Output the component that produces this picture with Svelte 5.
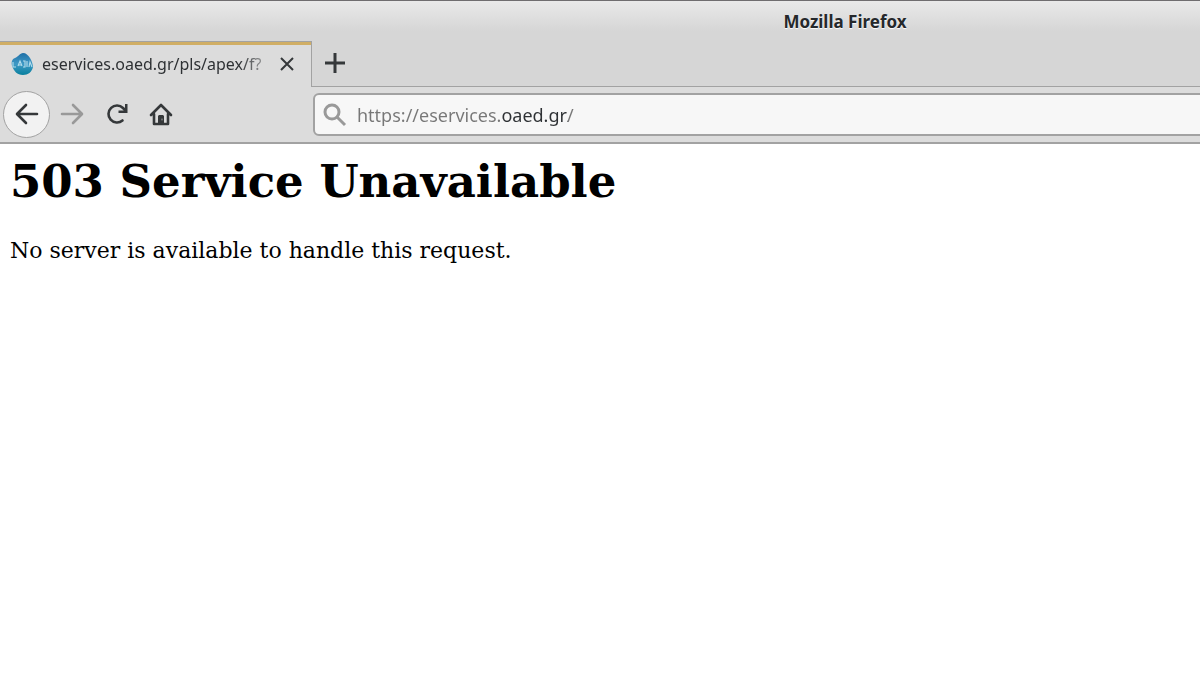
<script>
  let address = $state('https://eservices.oaed.gr/');

  const tabs = [{ id: 1, title: 'eservices.oaed.gr/pls/apex/f?' }];
</script>

<div class="window">
  <header class="titlebar">Mozilla Firefox</header>

  <div class="tabstrip">
    {#each tabs as tab (tab.id)}
      <div class="tab">
        <svg class="favicon" viewBox="0 0 24 24" aria-hidden="true">
          <defs>
            <linearGradient id="drop" x1="0" y1="0" x2="0" y2="1">
              <stop offset="0" stop-color="#1f6fa6" />
              <stop offset="0.5" stop-color="#3f9ac6" />
              <stop offset="1" stop-color="#087f9d" />
            </linearGradient>
          </defs>
          <path
            d="M13 1c3 0 5 2 7 5 2 3 3 7 3 9-1 5-5 8-10 8-6 0-9-4-11-9-1-4 0-7 3-8 3-1 5-5 8-5z"
            fill="url(#drop)"
          />
          <path
            d="M3 10v5h3M8 14l2-5 2 5M9 13h2M13 9h2v6h-2M17 9v6M19 15l1-5 2 5"
            fill="none"
            stroke="#b4ddec"
            stroke-width="1.1"
          />
        </svg>
        <span class="tab-title">{tab.title}</span>
        <button class="close" aria-label="Close tab">
          <svg viewBox="0 0 16 16"><path d="M2 2l12 12M14 2L2 14" /></svg>
        </button>
      </div>
    {/each}
    <div class="strip-rest">
      <button class="new-tab" aria-label="New tab">
        <svg viewBox="0 0 20 20"><path d="M10 0v20M0 10h20" /></svg>
      </button>
    </div>
  </div>

  <nav class="toolbar">
    <div class="nav-buttons">
      <button class="back" aria-label="Back">
        <svg viewBox="0 0 24 24"><path d="M22 12H3M11 3l-9 9 9 9" /></svg>
      </button>
      <button class="forward" aria-label="Forward" disabled>
        <svg viewBox="0 0 24 24"><path d="M2 12h19M13 3l9 9-9 9" /></svg>
      </button>
      <button aria-label="Reload">
        <svg viewBox="0 0 24 24">
          <path d="M17.500 18.500A8.500 8.500 0 1 1 18 6l2 2" />
          <path class="solid" d="M22.500 2v9h-9V8.500h5L20 7V2z" />
        </svg>
      </button>
      <button aria-label="Home">
        <svg viewBox="0 0 24 24">
          <path d="M2 13L12 3l10 10M5 12v10h14V12" />
          <path class="solid" d="M9 22v-8l1-1h4l1 1v8z" />
          <path class="knob" d="M13 17v1" />
        </svg>
      </button>
    </div>

    <label class="urlbar">
      <svg viewBox="0 0 24 24" aria-hidden="true">
        <circle cx="9" cy="9" r="7" />
        <path d="M14 14l8 8" />
      </svg>
      <input type="text" aria-label="Address" spellcheck="false" bind:value={address} />
    </label>
  </nav>

  <main>
    <h1>503 Service Unavailable</h1>
    <p>No server is available to handle this request.</p>
  </main>
</div>

<style>
  :global(body) {
    margin: 0;
    background: #fff;
  }

  .window {
    overflow: hidden;
    font-family: 'Noto Sans', sans-serif;
    font-size: 18px;
    color: #2e3134;
  }

  .titlebar {
    box-sizing: border-box;
    height: 41px;
    padding-left: 490px;
    border-top: 1px solid #6f6d6f;
    background: linear-gradient(#e9e9e9, #d6d6d6 75%);
    color: #25282b;
    font-size: 17px;
    font-weight: 700;
    line-height: 42px;
    text-align: center;
    text-shadow: 0 1px 1px #fff;
  }

  .tabstrip {
    display: flex;
    height: 46px;
    background: #d6d6d6;
  }

  .tab {
    box-sizing: border-box;
    display: flex;
    align-items: center;
    width: 312px;
    padding: 0 12px 1px 10px;
    border-top: 1px solid #a2a2a2;
    border-right: 1px solid #a2a2a2;
    background: #dcdcdc;
    box-shadow: inset 0 3px #d0ae65;
  }

  .favicon {
    flex: none;
    width: 24px;
    height: 24px;
    margin-right: 8px;
  }

  .tab-title {
    flex: 1;
    overflow: hidden;
    font-size: 16px;
    white-space: nowrap;
    mask-image: linear-gradient(to left, rgb(0 0 0 / 0.2), #000 32px);
  }

  button {
    display: grid;
    place-items: center;
    padding: 0;
    border: 0;
    background: none;
    color: #35383a;
  }

  button svg,
  .urlbar svg {
    fill: none;
    stroke: currentColor;
    stroke-width: 3;
  }

  button .solid {
    fill: currentColor;
    stroke: none;
  }

  button .knob {
    stroke: #aaa;
    stroke-width: 1;
  }

  .close {
    width: 24px;
    height: 24px;
    margin-left: 4px;
  }

  .close svg {
    width: 16px;
    height: 16px;
    stroke-width: 2;
  }

  .strip-rest {
    flex: 1;
    border-bottom: 1px solid #a2a2a2;
  }

  .new-tab {
    width: 46px;
    height: 44px;
  }

  .new-tab svg {
    width: 20px;
    height: 20px;
  }

  .toolbar {
    box-sizing: border-box;
    display: flex;
    height: 57px;
    padding-top: 3px;
    border-bottom: 2px solid #a2a2a2;
    background: #dcdcdc;
  }

  .nav-buttons {
    display: flex;
    flex: none;
    align-items: center;
    width: 310px;
    height: 48px;
    padding-left: 3px;
  }

  .nav-buttons button {
    width: 44px;
    height: 44px;
  }

  .nav-buttons svg {
    width: 24px;
    height: 24px;
    stroke-width: 2.6;
    stroke-linecap: round;
    stroke-linejoin: round;
  }

  .nav-buttons .back {
    box-sizing: border-box;
    width: 47px;
    height: 47px;
    border: 1px solid #a2a2a2;
    border-radius: 50%;
    background: #f2f2f2;
  }

  .nav-buttons .forward {
    margin-right: 1px;
    color: #999;
  }

  .urlbar {
    box-sizing: border-box;
    display: flex;
    flex: 1;
    align-items: center;
    height: 43px;
    margin: 3px -8px 0 0;
    padding-left: 8px;
    border: 2px solid #a2a2a2;
    border-radius: 6px;
    background: #f7f7f7;
  }

  .urlbar svg {
    flex: none;
    width: 24px;
    height: 24px;
    margin-right: 10px;
    color: #999;
  }

  input {
    flex: 1;
    min-width: 0;
    padding: 0;
    border: 0;
    outline: none;
    background: linear-gradient(to right, #777 145px, #2e3134 145px 211px, #777 211px);
    background-clip: text;
    color: transparent;
    caret-color: #2e3134;
    font: inherit;
  }

  main {
    padding: 11px 10px;
    color: #000;
    font-family: 'DejaVu Serif', serif;
  }

  h1 {
    margin: 0;
    font-size: 45px;
    line-height: 54px;
  }

  p {
    margin: 28px 0 0;
    font-size: 22px;
    line-height: 28px;
  }
</style>
